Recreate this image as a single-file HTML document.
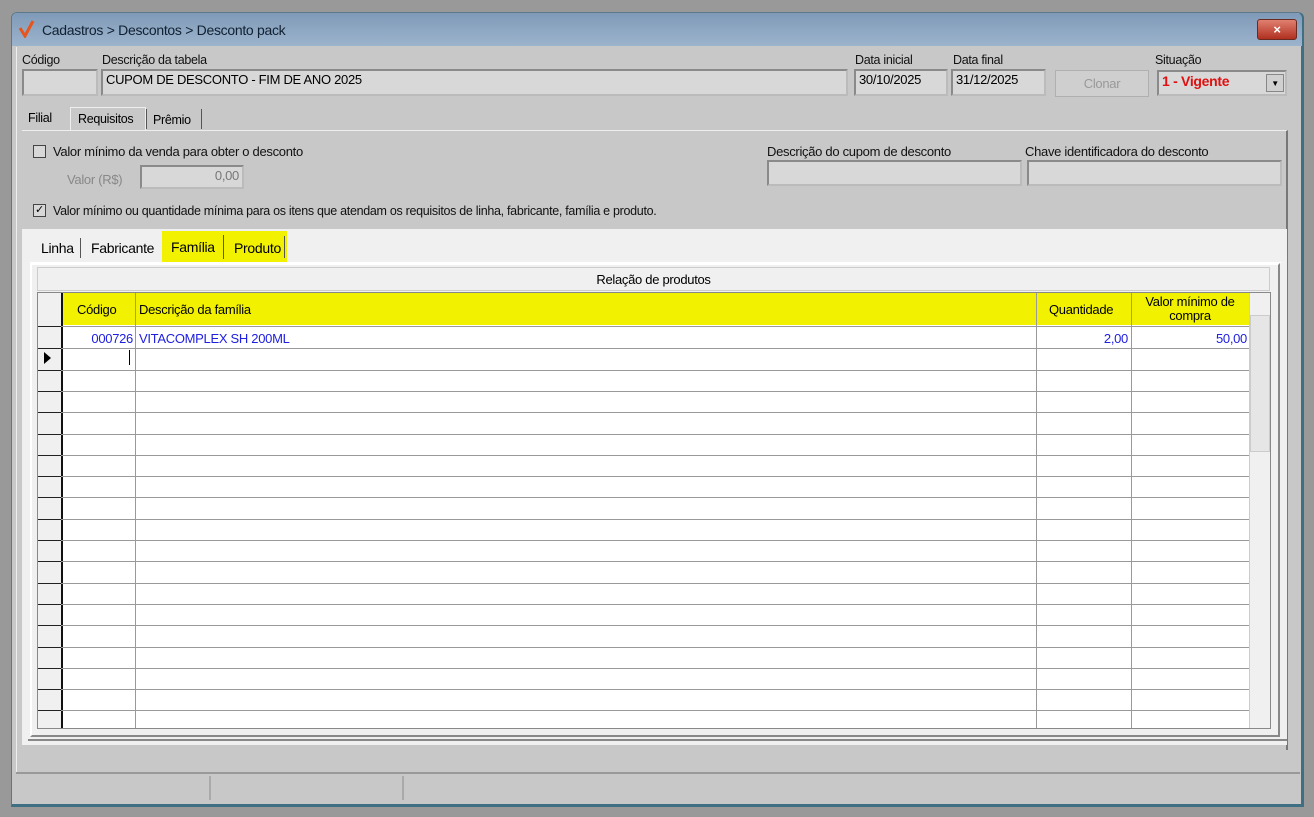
<!DOCTYPE html>
<html><head><meta charset="utf-8"><style>
*{box-sizing:border-box;margin:0;padding:0}
body{width:1314px;height:817px;background:#999;font-family:"Liberation Sans",sans-serif;font-size:12px;color:#000;position:relative;overflow:hidden;letter-spacing:-0.3px}
.a{position:absolute}
.inp{position:absolute;background:#d8d8d8;border:2px solid #8a8a8a;border-right-color:#bbb;border-bottom-color:#bbb;padding:1px 3px;font-size:13px;white-space:nowrap}
.lbl{position:absolute;font-size:12.5px;color:#111}
.hl{background:#f2f200}
.row{position:absolute;left:38px;width:1211px;height:1px;background:#999}
.row:before{content:"";position:absolute;left:0;top:0;width:23px;height:1px;background:#222}
.vl{position:absolute;width:1px;background:#999}
</style></head><body>
<div class="a" style="left:11px;top:12px;width:1293px;height:795px;background:#c8c8c8;border:1px solid #5a7a8a;border-bottom:3px solid #3e6f82;border-right:3px solid #3e6f82;border-radius:6px 6px 0 0"></div>
<div class="a" style="left:12px;top:13px;width:1290px;height:33px;background:linear-gradient(#7f9ab8,#9cb3cc);border-radius:5px 5px 0 0"></div>
<svg class="a" style="left:18px;top:20px" width="20" height="18"><path d="M2 8 L7 16 L15 1" stroke="#e8541c" stroke-width="3" fill="none"/></svg>
<div class="a" style="left:42px;top:22px;font-size:14px;color:#102030">Cadastros &gt; Descontos &gt; Desconto pack</div>
<div class="a" style="left:1257px;top:19px;width:40px;height:21px;background:linear-gradient(#e08070,#b03020);border:1px solid #6a2a20;border-radius:3px;color:#fff;font-weight:bold;text-align:center;font-size:13px;line-height:19px">×</div>
<div class="a" style="left:16px;top:47px;width:1284px;height:726px;background:#c8c8c8;border-left:1px solid #eee"></div>
<div class="lbl" style="left:22px;top:53px">Código</div>
<div class="inp" style="left:22px;top:69px;width:76px;height:27px"></div>
<div class="lbl" style="left:102px;top:53px">Descrição da tabela</div>
<div class="inp" style="left:101px;top:69px;width:747px;height:27px">CUPOM DE DESCONTO - FIM DE ANO 2025</div>
<div class="lbl" style="left:855px;top:53px">Data inicial</div>
<div class="inp" style="left:854px;top:69px;width:94px;height:27px">30/10/2025</div>
<div class="lbl" style="left:953px;top:53px">Data final</div>
<div class="inp" style="left:951px;top:69px;width:95px;height:27px">31/12/2025</div>
<div class="a" style="left:1055px;top:70px;width:94px;height:27px;background:#cfcfcf;border:1px solid #b0b0b0;color:#999;text-align:center;line-height:26px;font-size:13px">Clonar</div>
<div class="lbl" style="left:1155px;top:53px">Situação</div>
<div class="inp" style="left:1157px;top:70px;width:130px;height:26px;color:#e01010;font-weight:bold;font-size:14px;background:#d8d8d8">1 - Vigente</div>
<div class="a" style="left:1266px;top:74px;width:18px;height:18px;background:#d0d0d0;border:1px solid #888;font-size:8px;text-align:center;line-height:17px">▼</div>
<div class="a" style="left:28px;top:111px;font-size:12.5px">Filial</div>
<div class="a" style="left:70px;top:107px;width:76px;height:24px;background:#c8c8c8;border:1px solid #eee;border-bottom:none"></div>
<div class="a" style="left:78px;top:112px;font-size:12.5px">Requisitos</div>
<div class="a" style="left:146px;top:109px;width:1px;height:20px;background:#555"></div>
<div class="a" style="left:153px;top:113px;font-size:12.5px">Prêmio</div>
<div class="a" style="left:201px;top:109px;width:1px;height:20px;background:#555"></div>
<div class="a" style="left:22px;top:130px;width:1266px;height:620px;border-right:2px solid #777;border-top:1px solid #eee"></div>
<div class="a" style="left:33px;top:145px;width:13px;height:13px;border:1px solid #444;background:#d8d8d8"></div>
<div class="lbl" style="left:53px;top:144px;font-size:13px">Valor mínimo da venda para obter o desconto</div>
<div class="lbl" style="left:67px;top:172px;color:#888;font-size:13px">Valor (R$)</div>
<div class="inp" style="left:140px;top:165px;width:104px;height:24px;text-align:right;color:#777">0,00</div>
<div class="lbl" style="left:767px;top:144px;font-size:13px">Descrição do cupom de desconto</div>
<div class="inp" style="left:767px;top:160px;width:255px;height:26px"></div>
<div class="lbl" style="left:1025px;top:144px;font-size:13px">Chave identificadora do desconto</div>
<div class="inp" style="left:1027px;top:160px;width:255px;height:26px"></div>
<div class="a" style="left:33px;top:204px;width:13px;height:13px;border:1px solid #444;background:#d8d8d8;font-size:11px;line-height:11px;text-align:center">✓</div>
<div class="lbl" style="left:53px;top:204px;font-size:12.5px">Valor mínimo ou quantidade mínima para os itens que atendam os requisitos de linha, fabricante, família e produto.</div>
<div class="a" style="left:22px;top:229px;width:1265px;height:516px;background:#f0f0f0"></div>
<div class="a" style="left:41px;top:240px;font-size:14px">Linha</div>
<div class="a" style="left:80px;top:238px;width:1px;height:20px;background:#555"></div>
<div class="a" style="left:91px;top:240px;font-size:14px">Fabricante</div>
<div class="a hl" style="left:162px;top:231px;width:125px;height:31px"></div>
<div class="a" style="left:171px;top:239px;font-size:14px">Família</div>
<div class="a" style="left:223px;top:235px;width:1px;height:24px;background:#555"></div>
<div class="a" style="left:234px;top:240px;font-size:14px">Produto</div>
<div class="a" style="left:284px;top:236px;width:1px;height:22px;background:#555"></div>
<div class="a" style="left:30px;top:262px;width:1251px;height:1px;background:#fff"></div>
<div class="a" style="left:30px;top:263px;width:1250px;height:474px;border:2px solid #888;border-left-color:#fff;border-top-color:#fff;border-right-color:#888"></div>
<div class="a" style="left:28px;top:739px;width:1259px;height:2px;background:#888"></div>
<div class="a" style="left:37px;top:267px;width:1233px;height:24px;background:#f0f0f0;border:1px solid #ccc;text-align:center;line-height:24px;font-size:13px">Relação de produtos</div>
<div class="a" style="left:37px;top:292px;width:1234px;height:437px;background:#fff;border:1px solid #888"></div>
<div class="a" style="left:38px;top:293px;width:23px;height:435px;background:#f0f0f0"></div>
<div class="a hl" style="left:61px;top:293px;width:1188px;height:32px"></div>
<div class="a" style="left:1249px;top:293px;width:21px;height:435px;background:#f0f0f0;border-left:1px solid #ccc"></div>
<div class="a" style="left:1250px;top:315px;width:20px;height:137px;background:#e6e6e6;border:1px solid #ccc"></div>
<div class="a" style="left:77px;top:302px;font-size:13px">Código</div>
<div class="a" style="left:139px;top:302px;font-size:13px">Descrição da família</div>
<div class="a" style="left:1049px;top:302px;font-size:13px">Quantidade</div>
<div class="a" style="left:1131px;top:295px;width:118px;text-align:center;font-size:13px;line-height:14px">Valor mínimo de<br>compra</div>
<div class="a" style="left:62px;top:331px;width:71px;text-align:right;color:#2020e0;font-size:13px">000726</div>
<div class="a" style="left:139px;top:331px;color:#2020e0;font-size:13px">VITACOMPLEX SH 200ML</div>
<div class="a" style="left:1036px;top:331px;width:92px;text-align:right;color:#2020e0;font-size:13px">2,00</div>
<div class="a" style="left:1131px;top:331px;width:116px;text-align:right;color:#2020e0;font-size:13px">50,00</div>
<div class="a" style="left:44px;top:352px;width:0;height:0;border-left:7px solid #000;border-top:6px solid transparent;border-bottom:6px solid transparent"></div>
<div class="a" style="left:129px;top:350px;width:1px;height:15px;background:#000"></div>
<div class="a" style="left:61px;top:293px;width:2px;height:435px;background:#111"></div>
<div class="vl" style="left:135px;top:293px;height:435px"></div>
<div class="vl" style="left:1036px;top:293px;height:435px"></div>
<div class="vl" style="left:1131px;top:293px;height:435px"></div>
<div class="row" style="top:326px"></div>
<div class="row" style="top:348px"></div>
<div class="row" style="top:370px"></div>
<div class="row" style="top:391px"></div>
<div class="row" style="top:412px"></div>
<div class="row" style="top:434px"></div>
<div class="row" style="top:455px"></div>
<div class="row" style="top:476px"></div>
<div class="row" style="top:497px"></div>
<div class="row" style="top:519px"></div>
<div class="row" style="top:540px"></div>
<div class="row" style="top:561px"></div>
<div class="row" style="top:583px"></div>
<div class="row" style="top:604px"></div>
<div class="row" style="top:625px"></div>
<div class="row" style="top:647px"></div>
<div class="row" style="top:668px"></div>
<div class="row" style="top:689px"></div>
<div class="row" style="top:710px"></div>
<div class="a" style="left:16px;top:772px;width:1284px;height:2px;background:#999"></div>
<div class="a" style="left:209px;top:776px;width:2px;height:24px;background:#aaa"></div>
<div class="a" style="left:402px;top:776px;width:2px;height:24px;background:#aaa"></div>
</body></html>
